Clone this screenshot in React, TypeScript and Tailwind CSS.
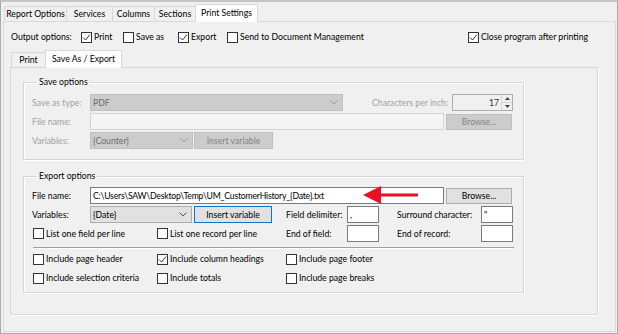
import React from "react";

function Check({ checked, label, disabled }: { checked?: boolean; label: string; disabled?: boolean }) {
  return (
    <span className="flex items-center gap-[2px] whitespace-nowrap">
      <span className="w-[11px] h-[11px] border border-[#333333] bg-white flex items-center justify-center shrink-0">
        {checked && (
          <svg width="9" height="9" viewBox="0 0 9 9">
            <path d="M1 4.5 L3.5 7 L8 1.5" fill="none" stroke="#333333" strokeWidth="1" />
          </svg>
        )}
      </span>
      <span className={disabled ? "text-[#a0a0a0]" : ""}>{label}</span>
    </span>
  );
}

function Chevron({ color }: { color: string }) {
  return (
    <svg width="8" height="5" viewBox="0 0 8 5" className="shrink-0">
      <path d="M0.5 0.5 L4 4 L7.5 0.5" fill="none" stroke={color} strokeWidth="1" />
    </svg>
  );
}

function Tab({ label, w, selected }: { label: string; w: string; selected?: boolean }) {
  return selected ? (
    <div
      className={`${w} h-[18px] mb-[-1px] relative z-10 bg-white border border-b-0 border-[#d9d9d9] flex items-start justify-center pt-[2px] whitespace-nowrap`}
    >
      {label}
    </div>
  ) : (
    <div
      className={`${w} h-[15px] border-l border-t border-[#d9d9d9] flex items-center justify-center whitespace-nowrap`}
    >
      {label}
    </div>
  );
}

export default function App() {
  return (
    <div className="w-[618px] h-[334px] bg-[#f0f0f0] border-x border-b border-t-2 border-x-[#a9a9a9] border-b-[#a9a9a9] border-t-[#c4c4c4] flex flex-col text-[8.7px] leading-[12px] text-black font-['Lato',sans-serif]">
      {/* top tabs */}
      <div className="flex items-end h-[19px] pl-[3px]">
        <Tab label="Report Options" w="w-[62px]" />
        <Tab label="Services" w="w-[46px]" />
        <Tab label="Columns" w="w-[42px]" />
        <Tab label="Sections" w="w-[41px]" />
        <Tab label="Print Settings" w="w-[63px]" selected />
      </div>

      {/* outer tab page */}
      <div className="ml-[2px] mr-[1px] mb-[1px] flex-1 border border-[#d9d9d9] flex flex-col">
        {/* output options */}
        <div className="flex items-center h-[12px] mt-[9px] pl-[7px]">
          <span className="w-[70px] whitespace-nowrap">Output options:</span>
          <span className="w-[42px]"><Check checked label="Print" /></span>
          <span className="w-[55px]"><Check label="Save as" /></span>
          <span className="w-[49px]"><Check checked label="Export" /></span>
          <span className="w-[241px]"><Check label="Send to Document Management" /></span>
          <span><Check checked label="Close program after printing" /></span>
        </div>

        {/* inner tabs */}
        <div className="ml-[6px] w-[588px] flex flex-col">
          <div className="flex items-end h-[18px] mt-[6px] pl-[1px]">
            <div className="w-[34px] h-[15px] border-l border-t border-[#d9d9d9] flex items-center justify-center">
              Print
            </div>
            <div className="w-[77px] h-[18px] mb-[-1px] relative z-10 bg-white border border-b-0 border-[#d9d9d9] flex items-start justify-center pt-[2px] whitespace-nowrap">
              Save As / Export
            </div>
          </div>

          {/* inner tab page */}
          <div className="h-[248px] border border-[#d9d9d9] shadow-[1px_1px_0_#ffffff] pl-[12px] flex flex-col">
            {/* Save options */}
            <fieldset className="mt-[8px] w-[501px] border border-[#d5d5d5] shadow-[inset_1px_1px_0_#ffffff,1px_1px_0_#ffffff] pt-[6px] pb-[10px] pl-[8px] flex flex-col gap-[2px]">
              <legend className="ml-[5px] px-[2px] leading-[12px]">Save options</legend>
              <div className="flex items-center h-[17px]">
                <span className="w-[58px] text-[#a0a0a0] whitespace-nowrap">Save as type:</span>
                <div className="w-[253px] h-[17px] bg-[#cccccc] border border-[#bfbfbf] flex items-center pl-[2px] pr-[4px] text-[#6d6d6d]">
                  <span className="flex-1">PDF</span>
                  <Chevron color="#9a9a9a" />
                </div>
                <span className="ml-[29px] w-[80px] text-[#a0a0a0] whitespace-nowrap">Characters per inch:</span>
                <div className="w-[61px] h-[17px] border border-[#adadad] bg-[#f0f0f0] flex items-stretch">
                  <span className="flex-1 text-right pr-[2px] flex items-center justify-end text-[#333333]">17</span>
                  <div className="w-[11px] flex flex-col border-l border-[#d5d5d5]">
                    <div className="flex-1 flex items-center justify-center border-b border-[#d5d5d5]">
                      <svg width="5" height="3" viewBox="0 0 5 3"><path d="M0 3 L2.5 0 L5 3 Z" fill="#444444" /></svg>
                    </div>
                    <div className="flex-1 flex items-center justify-center">
                      <svg width="5" height="3" viewBox="0 0 5 3"><path d="M0 0 L2.5 3 L5 0 Z" fill="#444444" /></svg>
                    </div>
                  </div>
                </div>
              </div>
              <div className="flex items-center h-[17px]">
                <span className="w-[58px] text-[#a0a0a0] whitespace-nowrap">File name:</span>
                <div className="w-[354px] h-[17px] bg-[#f4f4f4] border border-[#d4d4d4]" />
                <div className="ml-[2px] w-[66px] h-[16px] bg-[#cccccc] border border-[#bfbfbf] flex items-center justify-center text-[#838383]">
                  Browse...
                </div>
              </div>
              <div className="flex items-center h-[17px]">
                <span className="w-[58px] text-[#a0a0a0] whitespace-nowrap">Variables:</span>
                <div className="w-[103px] h-[17px] bg-[#cccccc] border border-[#bfbfbf] flex items-center pl-[2px] pr-[4px] text-[#6d6d6d]">
                  <span className="flex-1">{"{Counter}"}</span>
                  <Chevron color="#9a9a9a" />
                </div>
                <div className="ml-[1px] w-[79px] h-[17px] bg-[#cccccc] border border-[#bfbfbf] flex items-center justify-center text-[#838383]">
                  Insert variable
                </div>
              </div>
            </fieldset>

            {/* Export options */}
            <fieldset className="mt-[10px] w-[501px] border border-[#d5d5d5] shadow-[inset_1px_1px_0_#ffffff,1px_1px_0_#ffffff] pt-[5px] pb-[8px] pl-[8px] flex flex-col">
              <legend className="ml-[5px] px-[2px] leading-[12px]">Export options</legend>
              <div className="flex flex-col gap-[2px]">
                <div className="flex items-center h-[17px]">
                  <span className="w-[58px] whitespace-nowrap">File name:</span>
                  <div className="relative w-[354px] h-[17px] bg-white border border-[#7a7a7a] flex items-center pl-[2px] whitespace-nowrap">
                    <span className="tracking-[-0.22px]">{"C:\\Users\\SAW\\Desktop\\Temp\\UM_CustomerHistory_{Date}.txt"}</span>
                    <svg
                      className="absolute left-[272px] top-[-3px]"
                      width="56"
                      height="20"
                      viewBox="0 0 56 20"
                    >
                      <polygon points="0,10 18,1 18,19" fill="#e81123" />
                      <rect x="17" y="8.5" width="38" height="3" fill="#e81123" />
                    </svg>
                  </div>
                  <div className="ml-[2px] w-[66px] h-[16px] bg-[#e1e1e1] border border-[#adadad] flex items-center justify-center">
                    Browse...
                  </div>
                </div>
                <div className="flex items-center h-[17px]">
                  <span className="w-[58px] whitespace-nowrap">Variables:</span>
                  <div className="w-[102px] h-[17px] bg-[#e1e1e1] border border-[#adadad] flex items-center pl-[2px] pr-[4px]">
                    <span className="flex-1">{"{Date}"}</span>
                    <Chevron color="#555555" />
                  </div>
                  <div className="ml-[2px] w-[78px] h-[17px] bg-[#e1e1e1] border border-[#0078d7] flex items-center justify-center">
                    Insert variable
                  </div>
                  <span className="ml-[14px] w-[61px] whitespace-nowrap">Field delimiter:</span>
                  <div className="w-[32px] h-[17px] bg-white border border-[#7a7a7a] flex items-center pl-[2px]">,</div>
                  <span className="ml-[18px] w-[84px] whitespace-nowrap">Surround character:</span>
                  <div className="w-[32px] h-[17px] bg-white border border-[#7a7a7a] flex items-center pl-[2px]">"</div>
                </div>
                <div className="flex items-center h-[17px]">
                  <span className="w-[125px] pl-[1px]"><Check label="List one field per line" /></span>
                  <span className="w-[129px]"><Check label="List one record per line" /></span>
                  <span className="w-[61px] whitespace-nowrap">End of field:</span>
                  <div className="w-[32px] h-[17px] bg-white border border-[#7a7a7a]" />
                  <span className="ml-[18px] w-[84px] whitespace-nowrap">End of record:</span>
                  <div className="w-[32px] h-[17px] bg-white border border-[#7a7a7a]" />
                </div>
              </div>
              <div className="ml-[1px] mt-[5px] w-[481px] h-[2px] border-t border-[#a0a0a0] border-b border-b-white" />
              <div className="flex flex-col gap-[7px] mt-[4px]">
                <div className="flex items-center h-[12px]">
                  <span className="w-[125px] pl-[1px]"><Check label="Include page header" /></span>
                  <span className="w-[129px]"><Check checked label="Include column headings" /></span>
                  <span><Check label="Include page footer" /></span>
                </div>
                <div className="flex items-center h-[12px]">
                  <span className="w-[125px] pl-[1px]"><Check label="Include selection criteria" /></span>
                  <span className="w-[129px]"><Check label="Include totals" /></span>
                  <span><Check label="Include page breaks" /></span>
                </div>
              </div>
            </fieldset>
          </div>
        </div>
      </div>
    </div>
  );
}
